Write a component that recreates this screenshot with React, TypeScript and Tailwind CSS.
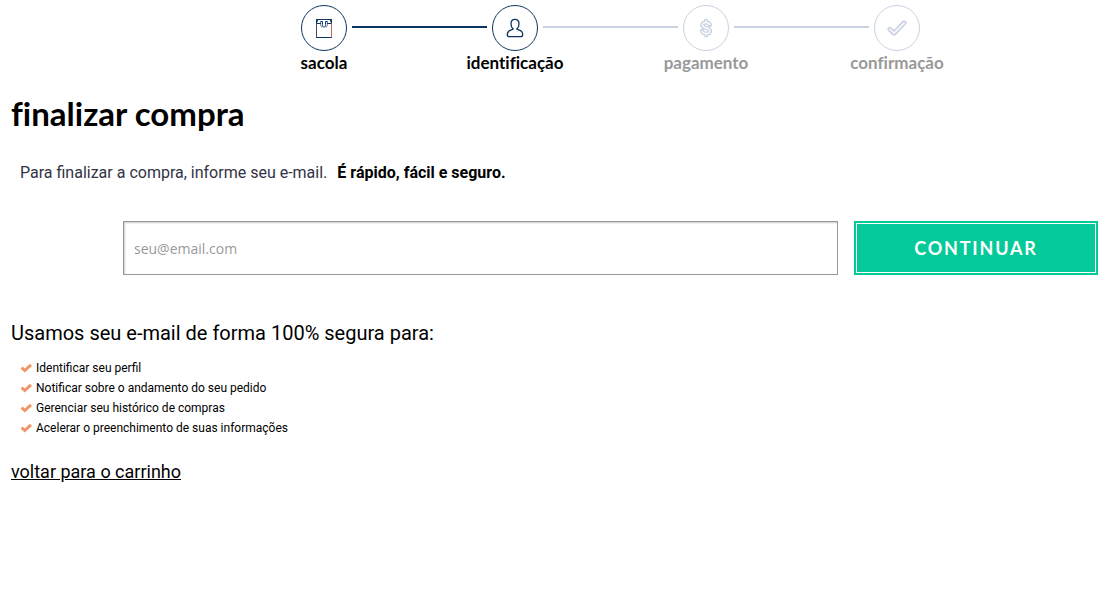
import type { ReactNode } from "react";

const BagIcon = () => (
  <svg viewBox="0 0 16 20" className="h-5 w-4" fill="none" stroke="currentColor" strokeWidth="1" aria-hidden="true">
    <path d="M0 1.500h16M0 5.500h5M11 5.500h5M0 19.500h16" />
    <path d="M.5 1v4.500M2 1.500L.8 4.500M14 1.500l1.200 3M15.500 1v4.500" />
    <path d="M4.500 3.500h2v3c0 1.600.5 2.700 1.500 2.700s1.500-1.100 1.500-2.700v-3h2" />
    <path d="M4.700 3.500v3c0 2 .8 2.500 1.600 2.500M11.300 3.500v3c0 2-.8 2.500-1.600 2.500" strokeWidth=".7" />
    <path d="M.5 5.500v14" stroke="#4a4560" />
    <path d="M15.500 5.500v14" stroke="#b86a55" />
  </svg>
);

const UserIcon = () => (
  <svg viewBox="0 0 18 20" className="h-5 w-[18px]" fill="none" stroke="currentColor" strokeWidth="1.300" strokeLinejoin="round" aria-hidden="true">
    <path d="M9 1.300C6.600 1.300 5 3 5 5.700c0 2.300.7 4.200 2.200 5.200-.3.500-.9.700-1.900 1-2.300.7-4 2-4 4.500 0 1.700.8 2.300 2.200 2.300h11c1.400 0 2.200-.6 2.200-2.300 0-2.500-1.700-3.800-4-4.500-1-.3-1.600-.5-1.900-1C12.300 9.900 13 8 13 5.700 13 3 11.400 1.300 9 1.300z" />
  </svg>
);

const DollarIcon = () => (
  <svg viewBox="0 0 14 20" className="h-5 w-[14px]" fill="none" strokeLinecap="round" strokeLinejoin="round" aria-hidden="true">
    <path
      d="M7 2.500v2M7 15.500v2M11 6.800C10.500 5.200 9 4.500 7 4.500c-2.200 0-3.700 1-3.700 2.600C3.300 11 11 9 11 12.900c0 1.600-1.500 2.600-4 2.600-2.200 0-3.600-.8-4.100-2.500"
      stroke="currentColor"
      strokeWidth="4.200"
    />
    <path
      d="M7 2.500v2M7 15.500v2M11 6.800C10.500 5.200 9 4.500 7 4.500c-2.200 0-3.700 1-3.700 2.600C3.300 11 11 9 11 12.900c0 1.600-1.500 2.600-4 2.600-2.200 0-3.600-.8-4.100-2.500"
      stroke="#fff"
      strokeWidth="1.300"
    />
  </svg>
);

const OutlineCheckIcon = () => (
  <svg viewBox="0 0 20 16" className="h-4 w-5" fill="none" strokeLinecap="round" strokeLinejoin="round" aria-hidden="true">
    <path d="M2.800 9.300l4.200 4L17.200 2.700" stroke="currentColor" strokeWidth="4.800" />
    <path d="M2.800 9.300l4.200 4L17.200 2.700" stroke="#fff" strokeWidth="1.500" />
  </svg>
);

const ListCheckIcon = () => (
  <svg viewBox="0 0 12 10" className="h-[10px] w-3 shrink-0" fill="none" stroke="#f29466" strokeWidth="3" aria-hidden="true">
    <path d="M1.600 4.600l3.100 2.900L11 1.900" />
  </svg>
);

type Step = { label: string; icon: ReactNode; reached: boolean; before: string; after: string };

const steps: Step[] = [
  { label: "sacola", icon: <BagIcon />, reached: true, before: "bg-transparent", after: "bg-[#0e3562]" },
  { label: "identificação", icon: <UserIcon />, reached: true, before: "bg-[#0e3562]", after: "bg-[#c9d1e2]" },
  { label: "pagamento", icon: <DollarIcon />, reached: false, before: "bg-[#c9d1e2]", after: "bg-[#c9d1e2]" },
  { label: "confirmação", icon: <OutlineCheckIcon />, reached: false, before: "bg-[#c9d1e2]", after: "bg-transparent" },
];

const benefits = [
  "Identificar seu perfil",
  "Notificar sobre o andamento do seu pedido",
  "Gerenciar seu histórico de compras",
  "Acelerar o preenchimento de suas informações",
];

export default function App() {
  return (
    <div className="bg-white font-[Roboto,sans-serif] text-black">
      <header className="flex justify-center pt-[5px] pl-[109px]">
        <ol className="flex w-full max-w-[764px]">
          {steps.map((step) => (
            <li key={step.label} className="flex min-w-0 flex-1 flex-col items-center">
              <div className="flex w-full items-center">
                <span className={`mr-[5px] mb-[2px] h-[2px] flex-1 ${step.before}`} />
                <span
                  className={`flex size-[46px] items-center justify-center rounded-full border ${
                    step.reached ? "border-[#0e3562] text-[#0e3562]" : "border-[#c9d1e2] text-[#c9d1e2]"
                  }`}
                >
                  {step.icon}
                </span>
                <span className={`mb-[2px] ml-[5px] h-[2px] flex-1 ${step.after}`} />
              </div>
              <span
                className={`font-[Lato,sans-serif] text-[17px] leading-6 font-bold [font-variant-ligatures:none] ${
                  step.reached ? "text-black" : "text-[#999999]"
                }`}
              >
                {step.label}
              </span>
            </li>
          ))}
        </ol>
      </header>

      <main>
        <h1 className="mt-[18px] px-[11px] font-[Lato,sans-serif] text-[33px] leading-10 font-bold [font-variant-ligatures:none]">
          finalizar compra
        </h1>
        <p className="mt-7 px-5 text-base leading-6 text-[#333344]">
          <label htmlFor="email">Para finalizar a compra, informe seu e-mail.</label>
          <strong className="ml-[10px] font-bold text-black">É rápido, fácil e seguro.</strong>
        </p>

        <form className="mt-9 flex gap-4 pr-[14px] pl-[123px]" onSubmit={(event) => event.preventDefault()}>
          <input
            id="email"
            type="email"
            placeholder="seu@email.com"
            className="h-[54px] min-w-0 flex-1 border border-[#999999] px-[10px] font-['Open_Sans',sans-serif] text-sm shadow-[inset_1px_1px_2px_#cccccc] placeholder:text-[#999999]"
          />
          <button
            type="submit"
            className="h-[54px] w-[244px] border-2 border-[#04c998] bg-[#04c998] font-[Lato,sans-serif] text-lg font-bold tracking-widest text-white uppercase shadow-[inset_0_0_0_1px_#ffffff]"
          >
            Continuar
          </button>
        </form>

        <section className="mt-11 px-[11px]">
          <h2 className="text-xl leading-7">Usamos seu e-mail de forma 100% segura para:</h2>
          <ul className="mt-[11px] pl-[9px] text-xs leading-5">
            {benefits.map((benefit) => (
              <li key={benefit} className="flex items-center gap-1">
                <ListCheckIcon />
                {benefit}
              </li>
            ))}
          </ul>
          <a href="#carrinho" className="mt-5 inline-block text-lg leading-7 underline">
            voltar para o carrinho
          </a>
        </section>
      </main>
    </div>
  );
}
